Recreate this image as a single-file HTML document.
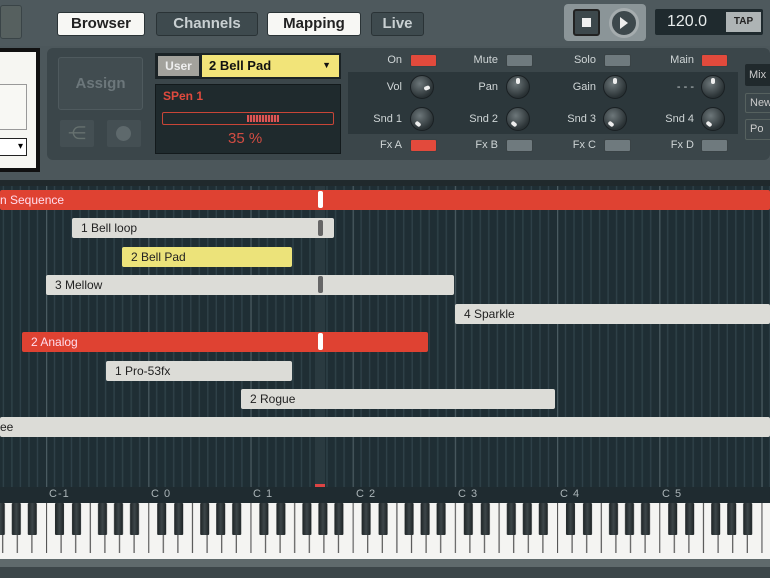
<!DOCTYPE html>
<html><head><style>
*{margin:0;padding:0;box-sizing:border-box}
body{width:770px;height:578px;overflow:hidden;background:#4c575b;font-family:"Liberation Sans",sans-serif;position:relative}
.a{position:absolute}
.tab{position:absolute;top:12px;height:24px;border-radius:3px;font-weight:bold;font-size:15px;text-align:center;line-height:22px;border:1px solid #2a3336}
.w{background:#f7f7f4;color:#222}
.d{background:#3e4a4e;color:#c9d0d2}
.lbl{position:absolute;font-size:11px;color:#cfd5d6;text-align:right;width:60px}
.tog{position:absolute;width:27px;height:13px;border-radius:2px;background:#6f7a7e;border:1px solid #394245}
.red{background:#e24a3c}
.knob{position:absolute;width:24px;height:24px;border-radius:50%;background:radial-gradient(circle at 40% 35%,#6d777a,#2a3235 70%);border:1px solid #1a2023}
.knob i{position:absolute;width:4px;height:6px;background:#eee;border-radius:2px}
.bar{position:absolute;height:20px;font-size:12px;line-height:20px;padding-left:9px;color:#222;border-radius:2px}
.g{background:#dcdcd7}
.r{background:#df4232;color:#fde}
.y{background:#ece37a}
.kl{position:absolute;top:488px;font-size:11px;color:#aab4b7;letter-spacing:1px}
</style></head><body>
<div class="a" style="left:0;top:0;width:770px;height:46px;background:#4e595d"></div>
<div class="a" style="left:0;top:5px;width:22px;height:34px;background:#56605f;border:1px solid #3a4447;border-radius:3px"></div>
<div class="tab w" style="left:57px;width:88px">Browser</div>
<div class="tab d" style="left:156px;width:102px">Channels</div>
<div class="tab w" style="left:267px;width:94px">Mapping</div>
<div class="tab d" style="left:371px;width:53px">Live</div>
<div class="a" style="left:564px;top:4px;width:82px;height:37px;background:#8b9598;border-radius:4px"></div>
<div class="a" style="left:573px;top:9px;width:27px;height:27px;background:#3d484c;border:2px solid #222;border-radius:3px"></div>
<div class="a" style="left:582px;top:18px;width:9px;height:9px;background:#f0f0f0"></div>
<div class="a" style="left:609px;top:8px;width:30px;height:30px;border-radius:50%;background:#3d484c;border:3px solid #a5acae"></div>
<div class="a" style="left:620px;top:17px;width:0;height:0;border-left:8px solid #eee;border-top:6px solid transparent;border-bottom:6px solid transparent"></div>
<div class="a" style="left:655px;top:9px;width:108px;height:26px;background:#1f2a2e;border-radius:2px;color:#e8ecec;font-size:16px;line-height:26px;padding-left:12px">120.0</div>
<div class="a" style="left:726px;top:12px;width:35px;height:20px;background:#aeb4b5;color:#222;font-size:10px;font-weight:bold;text-align:center;line-height:20px">TAP</div>
<div class="a" style="left:0;top:48px;width:40px;height:124px;background:#111"></div>
<div class="a" style="left:0;top:52px;width:36px;height:116px;background:#f6f6f2"></div>
<div class="a" style="left:0;top:84px;width:27px;height:46px;background:#f8f8f4;border:1px solid #999;border-left:none"></div>
<div class="a" style="left:0;top:138px;width:27px;height:18px;background:#fff;border:1px solid #222;border-left:none;font-size:10px;line-height:16px;text-align:right;padding-right:3px">▾</div>
<div class="a" style="left:47px;top:48px;width:723px;height:112px;background:#3b464a;border-radius:6px"></div>
<div class="a" style="left:58px;top:57px;width:85px;height:53px;border:1px solid #4f5a5e;border-radius:3px;background:#414c50;color:#6c777b;font-size:15px;font-weight:bold;text-align:center;line-height:51px">Assign</div>
<div class="a" style="left:60px;top:120px;width:34px;height:27px;background:#444f53;border-radius:2px;color:#66716f;font-size:18px;text-align:center;line-height:26px">⋲</div>
<div class="a" style="left:107px;top:120px;width:34px;height:27px;background:#444f53;border-radius:2px"></div>
<div class="a" style="left:116px;top:126px;width:15px;height:15px;border-radius:50%;background:#5e696c"></div>
<div class="a" style="left:155px;top:53px;width:186px;height:26px;background:#1b2326"></div>
<div class="a" style="left:158px;top:56px;width:41px;height:20px;background:#a3a29c;color:#eee;font-size:12px;font-weight:bold;line-height:20px;text-align:center">User</div>
<div class="a" style="left:202px;top:55px;width:137px;height:22px;background:#f2e479;color:#111;font-size:13px;font-weight:bold;line-height:21px;padding-left:7px">2 Bell Pad<span style="position:absolute;right:8px;font-size:9px">▼</span></div>
<div class="a" style="left:155px;top:84px;width:186px;height:70px;background:#1f2a2d;border:1px solid #131a1c"></div>
<div class="a" style="left:163px;top:89px;color:#e04a3e;font-size:12px;font-weight:bold">SPen 1</div>
<div class="a" style="left:162px;top:112px;width:172px;height:13px;border:1px solid #c84537;border-radius:2px"></div>
<div class="a" style="left:247px;top:115px;width:32px;height:7px;background:repeating-linear-gradient(90deg,#d55 0 2px,#4a2a2a 2px 3px)"></div>
<div class="a" style="left:228px;top:130px;color:#d24c42;font-size:15px">35 %</div>
<div class="a" style="left:348px;top:72px;width:390px;height:62px;background:#2c373b"></div>
<div class="lbl" style="left:342px;top:54px">On</div><div class="tog red" style="left:410px;top:54px"></div>
<div class="lbl" style="left:438px;top:54px">Mute</div><div class="tog" style="left:506px;top:54px"></div>
<div class="lbl" style="left:536px;top:54px">Solo</div><div class="tog" style="left:604px;top:54px"></div>
<div class="lbl" style="left:634px;top:54px">Main</div><div class="tog red" style="left:701px;top:54px"></div>
<div class="lbl" style="left:342px;top:81px">Vol</div><div class="knob" style="left:410px;top:75px"><i style="left:14px;top:9px;transform:rotate(70deg)"></i></div>
<div class="lbl" style="left:438px;top:81px">Pan</div><div class="knob" style="left:506px;top:75px"><i style="left:9px;top:2px"></i></div>
<div class="lbl" style="left:536px;top:81px">Gain</div><div class="knob" style="left:603px;top:75px"><i style="left:9px;top:2px"></i></div>
<div class="lbl" style="left:634px;top:81px">- - -</div><div class="knob" style="left:701px;top:75px"><i style="left:9px;top:2px"></i></div>
<div class="lbl" style="left:342px;top:113px">Snd 1</div><div class="knob" style="left:410px;top:107px"><i style="left:5px;top:13px;transform:rotate(-50deg)"></i></div>
<div class="lbl" style="left:438px;top:113px">Snd 2</div><div class="knob" style="left:506px;top:107px"><i style="left:5px;top:13px;transform:rotate(-50deg)"></i></div>
<div class="lbl" style="left:536px;top:113px">Snd 3</div><div class="knob" style="left:603px;top:107px"><i style="left:5px;top:13px;transform:rotate(-50deg)"></i></div>
<div class="lbl" style="left:634px;top:113px">Snd 4</div><div class="knob" style="left:701px;top:107px"><i style="left:5px;top:13px;transform:rotate(-50deg)"></i></div>
<div class="lbl" style="left:342px;top:139px">Fx A</div><div class="tog red" style="left:410px;top:139px"></div>
<div class="lbl" style="left:438px;top:139px">Fx B</div><div class="tog" style="left:506px;top:139px"></div>
<div class="lbl" style="left:536px;top:139px">Fx C</div><div class="tog" style="left:604px;top:139px"></div>
<div class="lbl" style="left:634px;top:139px">Fx D</div><div class="tog" style="left:701px;top:139px"></div>
<div class="a" style="left:745px;top:64px;width:30px;height:22px;background:#20292c;color:#ccc;font-size:11px;line-height:22px;padding-left:4px;border-radius:2px">Mix</div>
<div class="a" style="left:745px;top:93px;width:30px;height:20px;border:1px solid #56615f;color:#ccc;font-size:11px;line-height:18px;padding-left:4px;border-radius:2px">New</div>
<div class="a" style="left:745px;top:119px;width:30px;height:21px;border:1px solid #56615f;color:#ccc;font-size:11px;line-height:19px;padding-left:4px;border-radius:2px">Po</div>
<div class="a" style="left:0;top:180px;width:770px;height:6px;background:#20292c"></div>
<svg class="a" style="left:0;top:186px" width="770" height="317">
<defs><pattern id="gp" patternUnits="userSpaceOnUse" x="46" width="102.2" height="317">
<rect width="102.2" height="317" fill="#1f2e34"/>
<g stroke="#2f4148" stroke-width="1.4">
<line x1="8.5" y1="0" x2="8.5" y2="317"/><line x1="17" y1="0" x2="17" y2="317"/><line x1="25.5" y1="0" x2="25.5" y2="317"/><line x1="34" y1="0" x2="34" y2="317"/><line x1="42.6" y1="0" x2="42.6" y2="317"/><line x1="51.1" y1="0" x2="51.1" y2="317"/><line x1="59.6" y1="0" x2="59.6" y2="317"/><line x1="68.1" y1="0" x2="68.1" y2="317"/><line x1="76.6" y1="0" x2="76.6" y2="317"/><line x1="85.2" y1="0" x2="85.2" y2="317"/><line x1="93.7" y1="0" x2="93.7" y2="317"/></g>
<line x1="0.5" y1="0" x2="0.5" y2="317" stroke="#4a5b61" stroke-width="1.5"/>
</pattern></defs>
<rect width="770" height="317" fill="url(#gp)"/>
<rect x="315" y="0" width="10" height="300" fill="#2a3a40"/>
<rect x="315" y="298" width="10" height="3" fill="#d44"/>
<rect x="0" y="301" width="770" height="16" fill="#1f2b30"/>
</svg>
<div class="bar r" style="left:0;top:190px;width:770px;padding-left:0">n Sequence</div>
<div class="a" style="left:318px;top:191px;width:5px;height:17px;background:#fff;border-radius:2px"></div>
<div class="bar g" style="left:72px;top:218px;width:262px">1 Bell loop</div>
<div class="a" style="left:318px;top:220px;width:5px;height:16px;background:#666;border-radius:2px"></div>
<div class="bar y" style="left:122px;top:247px;width:170px">2 Bell Pad</div>
<div class="bar g" style="left:46px;top:275px;width:408px">3 Mellow</div>
<div class="a" style="left:318px;top:276px;width:5px;height:17px;background:#666;border-radius:2px"></div>
<div class="bar g" style="left:455px;top:304px;width:315px">4 Sparkle</div>
<div class="bar r" style="left:22px;top:332px;width:406px">2 Analog</div>
<div class="a" style="left:318px;top:333px;width:5px;height:17px;background:#fff;border-radius:2px"></div>
<div class="bar g" style="left:106px;top:361px;width:186px">1 Pro-53fx</div>
<div class="bar g" style="left:241px;top:389px;width:314px">2 Rogue</div>
<div class="bar g" style="left:0;top:417px;width:770px;padding-left:0">ee</div>
<div class="kl" style="left:49px">C-1</div><div class="kl" style="left:151px">C 0</div><div class="kl" style="left:253px">C 1</div><div class="kl" style="left:356px">C 2</div><div class="kl" style="left:458px">C 3</div><div class="kl" style="left:560px">C 4</div><div class="kl" style="left:662px">C 5</div>
<svg class="a" style="left:0;top:503px" width="770" height="75">
<defs>
<linearGradient id="bk" x1="0" y1="0" x2="1" y2="0"><stop offset="0" stop-color="#1c2224"/><stop offset="0.5" stop-color="#3d4649"/><stop offset="1" stop-color="#1c2224"/></linearGradient>
<pattern id="kp" patternUnits="userSpaceOnUse" x="46" width="102.2" height="52">
<rect width="102.2" height="52" fill="#f4f4f2"/>
<g stroke="#555" stroke-width="1.2"><line x1="0.5" y1="0" x2="0.5" y2="52"/><line x1="15.1" y1="0" x2="15.1" y2="52"/><line x1="29.7" y1="0" x2="29.7" y2="52"/><line x1="44.3" y1="0" x2="44.3" y2="52"/><line x1="58.9" y1="0" x2="58.9" y2="52"/><line x1="73.5" y1="0" x2="73.5" y2="52"/><line x1="88.1" y1="0" x2="88.1" y2="52"/></g>
<g fill="url(#bk)"><rect x="9" y="0" width="9" height="32" rx="1"/><rect x="26" y="0" width="9" height="32" rx="1"/><rect x="52" y="0" width="9" height="32" rx="1"/><rect x="68" y="0" width="9" height="32" rx="1"/><rect x="84" y="0" width="9" height="32" rx="1"/></g>
</pattern></defs>
<rect width="770" height="50" fill="url(#kp)"/>
<rect y="50" width="770" height="6" fill="#f4f4f2"/>
<rect y="56" width="770" height="8" fill="#5f6a6c"/>
<rect y="64" width="770" height="11" fill="#3c4649"/>
</svg>
</body></html>
